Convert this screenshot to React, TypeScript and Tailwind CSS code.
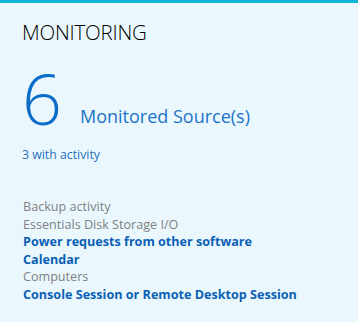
import React from "react"

const items = [
  { label: "Backup activity", bold: false },
  { label: "Essentials Disk Storage I/O", bold: false },
  { label: "Power requests from other software", bold: true },
  { label: "Calendar", bold: true },
  { label: "Computers", bold: false },
  { label: "Console Session or Remote Desktop Session", bold: true },
]

const App = () => {
  return (
    <div className="w-[359px] h-[322px] bg-white" style={{ fontFamily: "'Open Sans', 'Liberation Sans', sans-serif" }}>
      <div className="w-[358px] h-[322px] bg-[#eaf8fd] border-t-[3px] border-[#12b5d8] pl-[22px] pt-[16px]">
        {/* title */}
        <h2 className="text-[20.5px] font-light leading-[26px] text-black tracking-[-0.2px]">MONITORING</h2>

        {/* count */}
        <div className="flex items-end mt-[20px] h-[68px]">
          <span className="text-[70px] font-light leading-[70px] text-[#0b6dc8]">6</span>
          <span className="ml-[18px] mb-[5px] text-[18px] leading-[24px] text-[#1b74c9]">Monitored Source(s)</span>
        </div>

        <p className="mt-[14px] text-[12.3px] leading-[16px] text-[#1f70c2]">3 with activity</p>

        {/* list */}
        <ul className="mt-[35px] pl-px text-[12.6px] leading-[17.5px]">
          {items.map((it) => (
            <li
              key={it.label}
              className={it.bold ? "font-bold text-[#0a60b6]" : "text-[#808080]"}
            >
              {it.label}
            </li>
          ))}
        </ul>
      </div>
    </div>
  )
}

export default App
